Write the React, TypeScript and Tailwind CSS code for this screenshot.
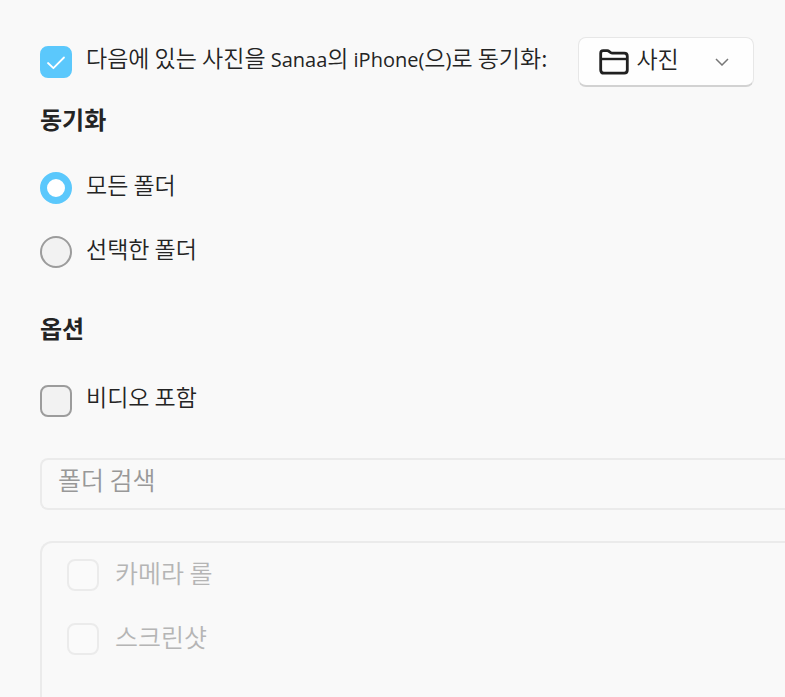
import { useState } from 'react'

const folders = ['카메라 롤', '스크린샷']

interface CheckboxProps {
  label: React.ReactNode
  checked?: boolean
  onChange?: (checked: boolean) => void
}

const Checkbox: React.FC<CheckboxProps> = ({ label, checked, onChange }) => (
  <label className="flex items-start gap-3.5">
    <span className="grid shrink-0">
      <input
        type="checkbox"
        checked={checked}
        onChange={(e) => onChange?.(e.target.checked)}
        className="col-start-1 row-start-1 size-8 appearance-none rounded-lg border-2 border-[#9c9c9c] bg-[#f2f2f2] checked:border-[#5bc8fc] checked:bg-[#5bc8fc]"
      />
      {checked && (
        <svg
          viewBox="0 0 32 32"
          className="pointer-events-none col-start-1 row-start-1 size-8"
          fill="none"
          stroke="white"
          strokeWidth="1.8"
          strokeLinecap="round"
          strokeLinejoin="round"
        >
          <path d="M8 17l5.4 5.2L24 11.5" />
        </svg>
      )}
    </span>
    <span className="leading-[22px]">{label}</span>
  </label>
)

interface RadioProps {
  label: string
  value: string
  selected: string
  onSelect: (value: string) => void
}

const Radio: React.FC<RadioProps> = ({ label, value, selected, onSelect }) => (
  <label className="flex items-start gap-3.5">
    <input
      type="radio"
      name="sync-folders"
      value={value}
      checked={selected === value}
      onChange={() => onSelect(value)}
      className="size-8 shrink-0 appearance-none rounded-full border-2 border-[#9c9c9c] bg-[#f2f2f2] checked:border-[7px] checked:border-[#5bc8fc] checked:bg-white"
    />
    <span className="leading-6">{label}</span>
  </label>
)

// Latin letters inside Korean text
const Latin: React.FC<{ children: string }> = ({ children }) => (
  <span className="font-['Open_Sans',sans-serif] text-xl font-normal">{children}</span>
)

const FolderIcon = () => (
  <svg
    viewBox="0 0 30 26"
    className="h-[26px] w-[30px]"
    fill="none"
    stroke="#202020"
    strokeLinejoin="round"
  >
    <path
      strokeWidth="2.8"
      d="M1.7 5V4.3C1.7 2.6 2.6 1.7 4.2 1.7h3.9c1 0 1.6.3 2.3.9l1.1.9c.6.5 1.1.7 2 .7h11.7c2 0 3.1 1 3.1 3v13.9c0 2-1.1 3.1-3.1 3.1H4.8c-2 0-3.1-1.1-3.1-3.1z"
    />
    <path strokeWidth="2.4" d="M2 10h26" />
  </svg>
)

export default function App() {
  const [sync, setSync] = useState(true)
  const [mode, setMode] = useState('all')
  const [videos, setVideos] = useState(false)

  return (
    <main className="min-h-screen overflow-x-hidden bg-[#f9f9f9] pt-[37px] pl-10 font-['Noto_Sans_CJK_KR',sans-serif] text-[23px] font-[350] text-[#242424]">
      <div className="flex items-center gap-[31px]">
        <Checkbox
          checked={sync}
          onChange={setSync}
          label={
            <>
              다음에 있는 사진을 <Latin>Sanaa</Latin>의 <Latin>iPhone(</Latin>으<Latin>)</Latin>로 동기화:
            </>
          }
        />
        <div className="grid w-44 shrink-0 items-center rounded-lg border border-b-2 border-[#e7e7e7] border-b-[#d2d2d2] bg-[#fefefe]">
          <select
            aria-label="사진"
            className="col-start-1 row-start-1 h-[47px] w-full appearance-none bg-transparent pb-2 pl-[57px] leading-8"
          >
            <option>사진</option>
          </select>
          <span className="pointer-events-none col-start-1 row-start-1 flex items-center justify-between pr-6 pl-5">
            <FolderIcon />
            <svg viewBox="0 0 14 8" className="h-2 w-[14px]" fill="none" stroke="#777" strokeWidth="1.5">
              <path d="M1 1l6 6 6-6" />
            </svg>
          </span>
        </div>
      </div>

      <h2 className="mt-4 text-2xl leading-8 font-bold">동기화</h2>
      <div className="mt-[37px] flex flex-col gap-8">
        <Radio label="모든 폴더" value="all" selected={mode} onSelect={setMode} />
        <Radio label="선택한 폴더" value="selected" selected={mode} onSelect={setMode} />
      </div>

      <h2 className="mt-11 text-2xl leading-8 font-bold">옵션</h2>
      <div className="mt-[41px]">
        <Checkbox label="비디오 포함" checked={videos} onChange={setVideos} />
      </div>

      <input
        type="search"
        aria-label="폴더 검색"
        placeholder="폴더 검색"
        className="mt-[41px] block h-[52px] w-full rounded-l-lg border-2 border-r-0 border-[#ebebeb] bg-[#f9f9f9] pb-2.5 pl-4 text-[25px] placeholder:text-[#989898]"
      />

      <ul className="mt-[31px] flex h-44 flex-col gap-8 rounded-tl-xl border-t-2 border-l-2 border-[#ebebeb] pt-4 pl-[25px] text-[25px] text-[#b5b5b5]">
        {folders.map((name) => (
          <li key={name}>
            <label className="flex items-start gap-4">
              <input
                type="checkbox"
                disabled
                className="size-8 shrink-0 appearance-none rounded-lg border-2 border-[#ebebeb] bg-[#fafafa]"
              />
              <span className="leading-[26px]">{name}</span>
            </label>
          </li>
        ))}
      </ul>
    </main>
  )
}
